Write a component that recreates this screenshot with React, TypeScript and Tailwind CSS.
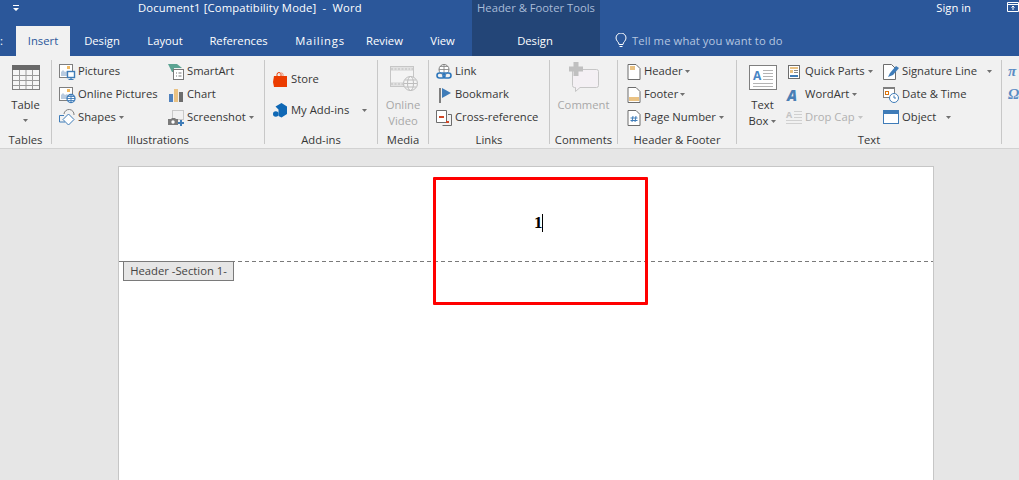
import type { ReactNode } from "react";

const Caret = ({ className = "ml-[3px]", light = false }: { className?: string; light?: boolean }) => (
  <svg width="5" height="3" viewBox="0 0 5 3" className={`shrink-0 ${className}`}>
    <path d="M0 0h5L2.500 3z" fill={light ? "#c4c4c4" : "#707070"} />
  </svg>
);

const Ico = ({ w = 16, h = 16, children }: { w?: number; h?: number; children: ReactNode }) => (
  <svg width={w} height={h} viewBox={`0 0 ${w} ${h}`} className="shrink-0 overflow-visible">
    {children}
  </svg>
);

// ribbon icons
const TableIcon = () => (
  <Ico w={28} h={25}>
    <rect x="0.500" y="0.500" width="27" height="24" fill="#f6f6f6" stroke="#7f7f7f" />
    <rect x="0" y="0" width="28" height="5" fill="#696969" />
    <path d="M1 10.500h26M1 15.500h26M1 20.500h26M7.500 5v19M14 5v19M20.500 5v19" stroke="#9a9a9a" />
  </Ico>
);

const PicBase = () => (
  <>
    <rect x="0.500" y="0.500" width="13" height="13" fill="#fff" stroke="#7f7f7f" />
    <path d="M2 12V8l2-2 2 2 2-1 2 2v3z" fill="#b9cbe0" />
    <rect x="8" y="2" width="3" height="3" fill="#f0b962" />
  </>
);

const PicturesIcon = () => (
  <Ico>
    <PicBase />
    <rect x="8.500" y="7.500" width="7" height="6" fill="#fff" stroke="#3f7cb8" strokeWidth="1.400" />
    <path d="M12 13.500v2M9.500 15.500h5" stroke="#3f7cb8" strokeWidth="1.200" />
  </Ico>
);

const OnlinePicturesIcon = () => (
  <Ico>
    <PicBase />
    <circle cx="12" cy="11.500" r="4" fill="#fff" stroke="#3f7cb8" strokeWidth="1.300" />
    <path d="M8 11.500h8M12 7.500v8M9 9.500h6M9 13.500h6" stroke="#3f7cb8" strokeWidth="0.900" />
  </Ico>
);

const ShapesIcon = () => (
  <Ico>
    <path d="M6 12H0.500V5.500H5" fill="none" stroke="#3f7cb8" />
    <path d="M5 4a5 5 0 0 1 10 1" fill="none" stroke="#7f7f7f" />
    <path d="M9.500 4l5.500 5.500-5.500 5.500L4 9.500z" fill="#fff" stroke="#3f7cb8" />
  </Ico>
);

const SmartArtIcon = () => (
  <Ico>
    <path d="M0 0h9l5 4H6v4H4z" fill="#5ba392" />
    <rect x="5.500" y="5.500" width="10" height="10" fill="#fff" stroke="#777" />
    <path d="M8 9h1M10.500 9h3M8 12h1M10.500 12h3" stroke="#777" />
  </Ico>
);

const ChartIcon = () => (
  <Ico>
    <rect x="1" y="7" width="4" height="8" fill="#4f81bd" />
    <rect x="6" y="2" width="4" height="13" fill="#eac283" />
    <rect x="11" y="5" width="4" height="10" fill="#6d6d6d" />
  </Ico>
);

const ScreenshotIcon = () => (
  <Ico>
    <rect x="4.500" y="0.500" width="11" height="9" fill="none" stroke="#a0a0a0" strokeDasharray="1 1" />
    <path d="M0 9h3l1-1h3l1 1h2v6H0z" fill="#7a7a7a" />
    <circle cx="5" cy="12" r="1.700" fill="#fff" />
    <path d="M13 10v6M10 13h6" stroke="#3f7cb8" strokeWidth="2" />
  </Ico>
);

const StoreIcon = () => (
  <Ico w={14} h={15}>
    <path d="M1 4h13v11H1L0 10z" fill="#eb3c00" />
    <path d="M4 5V2.500a2 2 0 0 1 4 0V4" fill="none" stroke="#eb3c00" strokeWidth="1" />
    <path d="M7 2.500a1.500 1.500 0 0 1 3 0V4" fill="none" stroke="#f08a68" strokeWidth="1" />
  </Ico>
);

const AddinsIcon = () => (
  <Ico w={14} h={15}>
    <path d="M2.500 3.500L8.500 0 14 3.500V11l-5.500 3.500-3-1.500V6.500z" fill="#0f68b5" />
    <circle cx="2.800" cy="11" r="2.800" fill="#0f68b5" />
  </Ico>
);

const OnlineVideoIcon = () => (
  <Ico w={28} h={25}>
    <rect x="0.500" y="0.500" width="23" height="20" fill="#f4f4f4" stroke="#c6c6c6" />
    <path d="M1 1.500h22v3H1zM1 16.500h22v3H1z" fill="#cfcfcf" />
    <path d="M3 3h1.500M6.500 3H8M10 3h1.500M13.500 3H15M17 3h1.500M20 3h1.500M3 18h1.500M6.500 18H8M10 18h1.500" stroke="#f4f4f4" />
    <circle cx="20.500" cy="17.500" r="7" fill="#f4f4f4" stroke="#bdbdbd" />
    <ellipse cx="20.500" cy="17.500" rx="3" ry="7" fill="none" stroke="#bdbdbd" />
    <path d="M14 17.500h13M15 14h11M15 21h11" stroke="#bdbdbd" />
  </Ico>
);

const LinkIcon = () => (
  <Ico>
    <circle cx="8" cy="5.500" r="5" fill="#fff" stroke="#7f7f7f" />
    <path d="M3 5.500h10M8 .5v10M4 2.500h8" stroke="#7f7f7f" strokeWidth="0.800" />
    <rect x="1" y="9" width="8" height="5" rx="2.500" fill="none" stroke="#2f77bb" strokeWidth="1.600" />
    <rect x="7" y="9" width="8" height="5" rx="2.500" fill="none" stroke="#2f77bb" strokeWidth="1.600" />
  </Ico>
);

const BookmarkIcon = () => (
  <Ico>
    <rect x="3" y="1" width="2" height="15" fill="#7f7f7f" />
    <path d="M6 1l9 5-9 5z" fill="#3f7cb8" />
  </Ico>
);

const CrossRefIcon = () => (
  <Ico>
    <path d="M.5.500h10v12H.5z" fill="#fff" stroke="#6d6d6d" />
    <rect x="3" y="6" width="5" height="2" fill="#d24726" />
    <path d="M12 4.500h3.500v11h-9" fill="none" stroke="#6d6d6d" />
    <rect x="10" y="11" width="3" height="2" fill="#d24726" />
  </Ico>
);

const CommentIcon = () => (
  <Ico w={30} h={30}>
    <path d="M3.500 7.500h24a2 2 0 0 1 2 2v14a2 2 0 0 1-2 2H11l-4.500 4v-4H5.500a2 2 0 0 1-2-2z" fill="#f4f0f4" stroke="#c6c6c6" />
    <path d="M4.500 0h5v4.500H14v5H9.500V14h-5V9.500H0v-5h4.500z" fill="#c0c0c0" />
  </Ico>
);

const DocBase = () => <path d="M1 .5h8l4 4v11H1z" fill="#fff" stroke="#6d6d6d" />;

const HeaderIcon = () => (
  <Ico w={14}>
    <DocBase />
    <rect x="3" y="2" width="5" height="4" fill="#eac283" />
  </Ico>
);

const FooterIcon = () => (
  <Ico w={14}>
    <DocBase />
    <rect x="2" y="10" width="10" height="4" fill="#eac283" />
  </Ico>
);

const PageNumberIcon = () => (
  <Ico w={14}>
    <DocBase />
    <path d="M6 6l-1 6M9 6l-1 6M3.500 8h7M3.500 10.500h7" stroke="#3f7cb8" />
  </Ico>
);

const TextBoxIcon = () => (
  <Ico w={28} h={25}>
    <rect x="0.500" y="0.500" width="27" height="24" fill="#fff" stroke="#7f7f7f" />
    <text x="4" y="15" fontSize="12" fontWeight="700" fontFamily="Open Sans, sans-serif" fill="#4a86c5">A</text>
    <path d="M14 5.500h10M14 8.500h10M14 11.500h10M14 14.500h10M4 18.500h20M4 21.500h20" stroke="#b4b4b4" />
  </Ico>
);

const QuickPartsIcon = () => (
  <Ico w={12} h={14}>
    <rect x="0.500" y="0.500" width="11" height="13" fill="#fff" stroke="#6d6d6d" />
    <rect x="2" y="2" width="8" height="2" fill="#eac283" />
    <rect x="2" y="5" width="3" height="3" fill="#eac283" />
    <path d="M6 5.500h4M6 7.500h4" stroke="#8a8a8a" />
    <rect x="2" y="10" width="8" height="2" fill="#3f7cb8" />
  </Ico>
);

const WordArtIcon = () => (
  <Ico w={12} h={14}>
    <text x="-1" y="13" fontSize="15" fontWeight="800" fontStyle="italic" fontFamily="Open Sans, sans-serif" fill="#4a7fb5">A</text>
  </Ico>
);

const DropCapIcon = () => (
  <Ico w={17} h={16}>
    <text x="0" y="8" fontSize="9" fontWeight="700" fontFamily="Open Sans, sans-serif" fill="#c4c4c4">A</text>
    <path d="M8 1.500h8M8 4.500h8M8 7.500h8M0 10.500h16M0 13.500h16" stroke="#d0d0d0" />
  </Ico>
);

const SignatureIcon = () => (
  <Ico>
    <path d="M.5.500h8l4 4v11H.5z" fill="#fff" stroke="#6d6d6d" />
    <path d="M5 13l2-4 6-7 3 2-6 7z" fill="#3f7cb8" />
  </Ico>
);

const DateTimeIcon = () => (
  <Ico>
    <rect x="0.500" y="0.500" width="11" height="10" fill="#fff" stroke="#7f7f7f" />
    <rect x="0" y="0" width="12" height="2" fill="#7f7f7f" />
    <rect x="2.500" y="4.500" width="3" height="3" fill="#fff" stroke="#d9730d" />
    <circle cx="11" cy="11" r="4.500" fill="#fff" stroke="#3f7cb8" />
    <path d="M11 8.500V11h2" fill="none" stroke="#3f7cb8" />
  </Ico>
);

const ObjectIcon = () => (
  <Ico>
    <rect x="0.500" y="0.500" width="15" height="13" fill="#fff" stroke="#3f7cb8" />
    <rect x="0" y="0" width="16" height="4" fill="#3f7cb8" />
  </Ico>
);

const SmallBtn = ({
  icon,
  label,
  caret,
  disabled,
  gap = "gap-[3px]",
}: {
  icon: ReactNode;
  label: string;
  caret?: ReactNode;
  disabled?: boolean;
  gap?: string;
}) => (
  <div className={`flex h-[23px] items-center whitespace-nowrap ${gap} ${disabled ? "text-[#b0b0b0]" : ""}`}>
    {icon}
    <span className="flex items-center">
      {label}
      {caret}
    </span>
  </div>
);

const Group = ({ label, w, children }: { label: string; w: string; children: ReactNode }) => (
  <div className={`flex h-[84px] shrink-0 flex-col border-r border-[#c8c8c8] ${w}`}>
    <div className="flex h-[74px] items-start">{children}</div>
    <div className="h-[10px] text-center leading-[11px] whitespace-nowrap">{label}</div>
  </div>
);

const TopTab = ({ w, children }: { w: string; children: string }) => (
  <div className={`flex items-center justify-center ${w}`}>{children}</div>
);

export default function App() {
  return (
    <div className="flex h-[480px] w-[1019px] flex-col overflow-hidden bg-[#e6e6e6] font-['Open_Sans',sans-serif] text-[11.25px] text-[#363636]">
      {/* title bar + tabs */}
      <header className="flex h-[56px] shrink-0 bg-[#2b579a] text-white">
        <div className="flex w-[472px] shrink-0 flex-col">
          <div className="flex h-[26px] items-center pb-[10px]">
            <svg width="7" height="7" viewBox="0 0 7 7" className="ml-[13px]">
              <path d="M0 0h6v1H0zM0 3h6L3 6z" fill="#fff" />
            </svg>
            <span className="ml-[118px] whitespace-pre tracking-[0.15px]">Document1 [Compatibility Mode]  -  Word</span>
          </div>
          <div className="flex h-[30px]">
            <div className="w-[16px] overflow-hidden pt-[7px] leading-[16px] whitespace-nowrap">:</div>
            <TopTab w="w-[54px] bg-[#f1f1f1] text-[#2b579a]">Insert</TopTab>
            <TopTab w="w-[64px]">Design</TopTab>
            <TopTab w="w-[62px]">Layout</TopTab>
            <TopTab w="w-[85px]">References</TopTab>
            <TopTab w="w-[78px] tracking-[0.8px]">Mailings</TopTab>
            <TopTab w="w-[51px]">Review</TopTab>
            <TopTab w="w-[62px] pl-[3px]">View</TopTab>
          </div>
        </div>
        <div className="flex w-[128px] shrink-0 flex-col bg-[#234577]">
          <div className="h-[26px] text-center leading-[16px] text-[#a9bcd8]">Header &amp; Footer Tools</div>
          <div className="flex h-[30px] items-center justify-center pr-[2px]">Design</div>
        </div>
        <div className="flex flex-1 flex-col">
          <div className="flex h-[26px] justify-end leading-[16px]">
            <span className="mr-[36px]">Sign in</span>
            <svg width="12" height="11" viewBox="0 0 12 11" className="mt-[2px] shrink-0">
              <path d="M.5.500h11v9H.5zM.5 2.500h11M6 8V4M4.500 5.500L6 4l1.500 1.500" fill="none" stroke="#fff" />
            </svg>
          </div>
          <div className="flex h-[30px] items-center pl-[15px] tracking-[0.1px] text-[#b5c6e0]">
            <svg width="12" height="16" viewBox="0 0 12 16" className="mr-[5px] shrink-0">
              <path d="M4 11.500C4 9 1 8 1 5a5 5 0 0 1 10 0c0 3-3 4-3 6.500zM4.500 13.500h3" fill="none" stroke="#fff" />
            </svg>
            Tell me what you want to do
          </div>
        </div>
      </header>

      {/* ribbon */}
      <nav className="flex h-[93px] shrink-0 border-b border-[#d2d2d2] bg-[#f1f1f1] pt-[4px]">
        <Group label="Tables" w="w-[52px]">
          <div className="flex w-full flex-col items-center leading-[16px]">
            <div className="h-[37px] pt-[5px]">
              <TableIcon />
            </div>
            <span>Table</span>
            <Caret className="mt-[6px]" />
          </div>
        </Group>

        <Group label="Illustrations" w="w-[213px]">
          <div className="w-[116px] pl-[7px]">
            <SmallBtn icon={<PicturesIcon />} label="Pictures" />
            <SmallBtn icon={<OnlinePicturesIcon />} label="Online Pictures" />
            <SmallBtn icon={<ShapesIcon />} label="Shapes" caret={<Caret />} />
          </div>
          <div>
            <SmallBtn icon={<SmartArtIcon />} label="SmartArt" />
            <SmallBtn icon={<ChartIcon />} label="Chart" />
            <SmallBtn icon={<ScreenshotIcon />} label="Screenshot" caret={<Caret />} />
          </div>
        </Group>

        <Group label="Add-ins" w="w-[113px]">
          <div className="flex flex-col gap-[8px] pl-[8px] pt-[8px]">
            <SmallBtn icon={<StoreIcon />} label="Store" gap="gap-[4px]" />
            <SmallBtn icon={<AddinsIcon />} label="My Add-ins" gap="gap-[4px]" caret={<Caret className="ml-[13px]" />} />
          </div>
        </Group>

        <Group label="Media" w="w-[51px]">
          <div className="flex w-full flex-col items-center leading-[16px] text-[#a8a8a8]">
            <div className="h-[37px] pt-[6px] pl-[2px]">
              <OnlineVideoIcon />
            </div>
            <span>Online</span>
            <span>Video</span>
          </div>
        </Group>

        <Group label="Links" w="w-[121px]">
          <div className="pl-[7px]">
            <SmallBtn icon={<LinkIcon />} label="Link" />
            <SmallBtn icon={<BookmarkIcon />} label="Bookmark" />
            <SmallBtn icon={<CrossRefIcon />} label="Cross-reference" />
          </div>
        </Group>

        <Group label="Comments" w="w-[68px]">
          <div className="flex w-full flex-col items-center leading-[16px] text-[#a8a8a8]">
            <div className="h-[37px] pt-[2px]">
              <CommentIcon />
            </div>
            <span>Comment</span>
          </div>
        </Group>

        <Group label="Header & Footer" w="w-[119px]">
          <div className="pl-[9px]">
            <SmallBtn icon={<HeaderIcon />} label="Header" caret={<Caret className="ml-[2px]" />} />
            <SmallBtn icon={<FooterIcon />} label="Footer" caret={<Caret className="ml-[2px]" />} />
            <SmallBtn icon={<PageNumberIcon />} label="Page Number" caret={<Caret className="ml-[3px]" />} />
          </div>
        </Group>

        <Group label="Text" w="w-[265px]">
          <div className="flex w-[51px] flex-col items-center leading-[16px]">
            <div className="h-[37px] pt-[5px]">
              <TextBoxIcon />
            </div>
            <span>Text</span>
            <span className="flex items-center">
              Box
              <Caret />
            </span>
          </div>
          <div className="w-[95px]">
            <SmallBtn icon={<QuickPartsIcon />} label="Quick Parts" gap="gap-[5px]" caret={<Caret />} />
            <SmallBtn icon={<WordArtIcon />} label="WordArt" gap="gap-[5px]" caret={<Caret />} />
            <div className="-ml-[2px]">
              <SmallBtn icon={<DropCapIcon />} label="Drop Cap" gap="gap-[2px]" disabled caret={<Caret light />} />
            </div>
          </div>
          <div>
            <SmallBtn icon={<SignatureIcon />} label="Signature Line" caret={<Caret className="ml-[10px]" />} />
            <SmallBtn icon={<DateTimeIcon />} label="Date & Time" />
            <SmallBtn icon={<ObjectIcon />} label="Object" caret={<Caret className="ml-[10px]" />} />
          </div>
        </Group>

        <div className="flex flex-col pl-[6px] font-['Liberation_Serif',serif] text-[15px] font-bold italic text-[#5a8cc4]">
          <span className="flex h-[23px] items-center">π</span>
          <span className="flex h-[23px] items-center">Ω</span>
        </div>
      </nav>

      {/* document canvas */}
      <main className="min-h-0 flex-1 pl-[118px] pt-[17px]">
        <div className="relative h-[400px] w-[816px] border border-[#c6c6c6] bg-white">
          <div className="flex h-[94px] items-start pl-[415px] pt-[47px] font-['Liberation_Serif',serif] text-[17px] font-bold text-black">
            <span className="leading-[18px]">1</span>
            <span className="-ml-[1px] h-[18px] w-px bg-black" />
          </div>
          <div className="h-px bg-[repeating-linear-gradient(90deg,#7a7a7a_0_4px,transparent_4px_7px)]" />
          <div className="absolute left-[4px] top-[94px] flex h-[20px] w-[111px] items-center justify-center border border-[#7a7a7a] bg-[#e6e6e6] whitespace-nowrap text-[#444]">
            Header -Section 1-
          </div>
          <div className="absolute left-[314px] top-[10px] h-[128px] w-[215px] rounded-[1px] border-[3px] border-[#ff0000]" />
        </div>
      </main>
    </div>
  );
}
